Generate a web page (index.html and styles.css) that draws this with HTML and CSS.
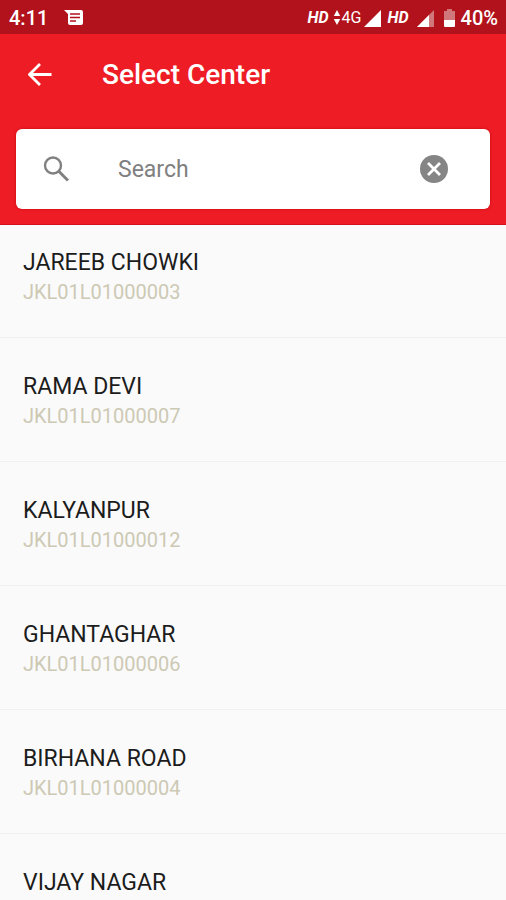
FILE: index.html
```html
<!DOCTYPE html>
<html lang="en">
<head>
<meta charset="utf-8">
<meta name="viewport" content="width=device-width, initial-scale=1">
<title>Select Center</title>
<link rel="stylesheet" href="styles.css">
</head>
<body>
<div class="screen">
  <div class="status">
    <span class="clock">4:11</span>
    <svg class="message" width="20" height="18" viewBox="0 0 20 18" aria-hidden="true"><path fill="#fff" d="M0 1h17q2 0 2 2v11q0 2-2 2H6q-2 0-2-2V5z"/><path d="M6 5h10M6 8.500h10M6 12h6" stroke="#b1121b" stroke-width="1.500"/></svg>
    <span class="hd">HD</span>
    <svg class="updown" width="8" height="16" viewBox="0 0 8 16" aria-hidden="true"><path fill="#fff" d="M4 0l3.200 6H.8zM4 15L.8 9h6.400z"/></svg>
    <span class="network">4G</span>
    <svg class="signal" width="17" height="17" viewBox="0 0 17 17" aria-hidden="true"><path fill="#fff" d="M17 0v17H0z"/></svg>
    <span class="hd">HD</span>
    <svg class="signal-two" width="17" height="17" viewBox="0 0 17 17" aria-hidden="true"><path fill="#d0777c" d="M17 0v17H0z"/><path fill="#fff" d="M12 5v12H0z"/></svg>
    <svg class="battery" width="11" height="18" viewBox="0 0 11 18" aria-hidden="true"><path fill="#d0777c" d="M3 0h5v2h3v10H0V2h3z"/><path fill="#fff" d="M0 11h11v6q0 1-1 1H1q-1 0-1-1z"/></svg>
    <span class="percent">40%</span>
  </div>
  <header class="header">
    <div class="toolbar">
      <button class="icon-button" type="button" aria-label="Back">
        <svg width="24" height="24" viewBox="0 0 24 24" aria-hidden="true"><path d="M23.500 11.500H2M12 1L1.500 11.500 12 22" fill="none" stroke="#fff" stroke-width="2.800"/></svg>
      </button>
      <h1 class="title">Select Center</h1>
    </div>
    <form class="search">
      <label class="search-icon" for="query" aria-label="Search">
        <svg width="26" height="26" viewBox="0 0 26 26" aria-hidden="true"><circle cx="10" cy="9.500" r="8" fill="none" stroke="#808080" stroke-width="2.400"/><path d="M15.500 15l9.500 9.500" stroke="#808080" stroke-width="3"/></svg>
      </label>
      <input class="query" id="query" type="text" placeholder="Search">
      <button class="icon-button" type="reset" aria-label="Clear">
        <svg width="28" height="28" viewBox="0 0 28 28" aria-hidden="true"><circle cx="14" cy="14" r="14" fill="#858585"/><path d="M8 8l12 12M20 8L8 20" stroke="#fff" stroke-width="2.800"/></svg>
      </button>
    </form>
  </header>
  <ul class="centers">
    <li class="center"><span class="name">JAREEB CHOWKI</span><span class="code">JKL01L01000003</span></li>
    <li class="center"><span class="name">RAMA DEVI</span><span class="code">JKL01L01000007</span></li>
    <li class="center"><span class="name">KALYANPUR</span><span class="code">JKL01L01000012</span></li>
    <li class="center"><span class="name">GHANTAGHAR</span><span class="code">JKL01L01000006</span></li>
    <li class="center"><span class="name">BIRHANA ROAD</span><span class="code">JKL01L01000004</span></li>
    <li class="center"><span class="name">VIJAY NAGAR</span></li>
  </ul>
</div>
</body>
</html>
```
FILE: styles.css
```css
* {
  box-sizing: border-box;
}

body {
  margin: 0;
  font-family: Roboto, "Liberation Sans", sans-serif;
  background: #fafafa;
}

.screen {
  display: flex;
  flex-direction: column;
  height: 100vh;
  overflow: hidden;
}

svg {
  display: block;
}

.status {
  display: flex;
  flex: none;
  align-items: center;
  padding: 2px 8px 0 9px;
  line-height: 32px;
  color: #fff;
  background: #b1121b;
}

.clock,
.percent {
  font-size: 20px;
  font-weight: 500;
}

.message {
  margin: 0 auto 0 16px;
}

.hd {
  font-size: 16px;
  font-weight: 700;
  font-style: italic;
}

.updown {
  margin: 0 1px 0 4px;
}

.network {
  font-size: 16px;
}

.signal {
  margin: 0 6px 0 3px;
}

.signal-two {
  margin: 0 10px 0 8px;
}

.battery {
  margin-right: 6px;
}

.header {
  flex: none;
  padding: 0 16px 15px;
  background: #ee1c25;
  border-bottom: 1px solid #d8101a;
}

.toolbar {
  display: flex;
  align-items: center;
  gap: 50px;
  padding: 21px 12px 34px;
}

.title {
  margin: 0;
  font-size: 28px;
  font-weight: 500;
  line-height: 40px;
  color: #fff;
}

.icon-button {
  padding: 0;
  background: none;
  border: 0;
}

.search {
  display: flex;
  align-items: center;
  height: 80px;
  margin: 0;
  padding: 0 42px 0 27px;
  background: #fff;
  border-radius: 6px;
  box-shadow: 0 0 3px #c00812;
}

.query {
  flex: 1;
  min-width: 0;
  margin-left: 49px;
  padding: 2px 0 0;
  font: 23px/32px Roboto, "Liberation Sans", sans-serif;
  color: #222;
  background: none;
  border: 0;
  outline: 0;
}

.query::placeholder {
  color: #808080;
  opacity: 1;
}

.centers {
  flex: 1;
  min-height: 0;
  margin: 0;
  padding: 0;
  list-style: none;
}

.center {
  display: flex;
  flex-direction: column;
  padding: 35px 23px 30px;
  border-bottom: 1px solid #f0f0f0;
}

.center:first-child {
  padding-top: 24px;
}

.name {
  font-size: 23px;
  line-height: 28px;
  color: #1c1c1c;
}

.code {
  font-size: 20px;
  line-height: 30px;
  color: #cdc9b4;
}
```
